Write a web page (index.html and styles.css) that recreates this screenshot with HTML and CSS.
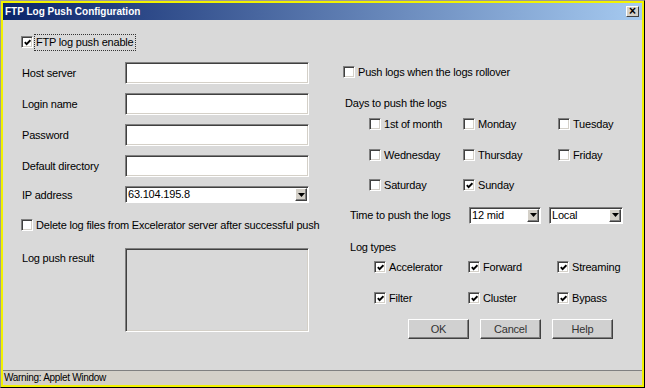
FILE: index.html
```html
<!DOCTYPE html>
<html lang="en">
<head>
  <meta charset="UTF-8" />
  <title>FTP Log Push Configuration</title>
  <link rel="stylesheet" href="styles.css">
</head>
<body>
  <div class="window">
    <div class="frame">
      <div class="titlebar">
        <span class="title">FTP Log Push Configuration</span>
        <span class="close">&#215;</span>
      </div>

      <div class="content">
        <div class="top-row">
          <label class="check">
            <span class="cb"><svg viewBox="0 0 7 7"><polyline points="0.8,3.2 2.6,5.2 6.4,1.2"/></svg></span>
            <span class="focus">FTP log push enable</span>
          </label>
        </div>

        <div class="main">
          <div class="left">
            <div class="form-grid">
              <span class="lbl">Host server</span>
              <div class="field"></div>
              <span class="lbl">Login name</span>
              <div class="field"></div>
              <span class="lbl">Password</span>
              <div class="field"></div>
              <span class="lbl">Default directory</span>
              <div class="field"></div>
              <span class="lbl">IP address</span>
              <div class="select">
                <span class="sel-text">63.104.195.8</span>
                <span class="arrow"><svg viewBox="0 0 7 4"><polygon points="0,0 7,0 3.5,4"/></svg></span>
              </div>
            </div>

            <label class="check delete-row">
              <span class="cb"></span>
              <span class="text">Delete log files from Excelerator server after successful push</span>
            </label>

            <div class="result-row">
              <span class="lbl result-lbl">Log push result</span>
              <div class="result-box"></div>
            </div>
          </div>

          <div class="right">
            <label class="check row rollover">
              <span class="cb"></span>
              <span class="text">Push logs when the logs rollover</span>
            </label>

            <div class="row caption days-caption">Days to push the logs</div>

            <div class="days-grid">
              <label class="check"><span class="cb"></span><span class="text">1st of month</span></label>
              <label class="check"><span class="cb"></span><span class="text">Monday</span></label>
              <label class="check"><span class="cb"></span><span class="text">Tuesday</span></label>
              <label class="check"><span class="cb"></span><span class="text">Wednesday</span></label>
              <label class="check"><span class="cb"></span><span class="text">Thursday</span></label>
              <label class="check"><span class="cb"></span><span class="text">Friday</span></label>
              <label class="check"><span class="cb"></span><span class="text">Saturday</span></label>
              <label class="check"><span class="cb"><svg viewBox="0 0 7 7"><polyline points="0.8,3.2 2.6,5.2 6.4,1.2"/></svg></span><span class="text">Sunday</span></label>
            </div>

            <div class="row time-row">
              <span class="time-lbl">Time to push the logs</span>
              <div class="select hour">
                <span class="sel-text">12 mid</span>
                <span class="arrow"><svg viewBox="0 0 7 4"><polygon points="0,0 7,0 3.5,4"/></svg></span>
              </div>
              <div class="select zone">
                <span class="sel-text">Local</span>
                <span class="arrow"><svg viewBox="0 0 7 4"><polygon points="0,0 7,0 3.5,4"/></svg></span>
              </div>
            </div>

            <div class="row caption types-caption">Log types</div>

            <div class="types-grid">
              <label class="check"><span class="cb"><svg viewBox="0 0 7 7"><polyline points="0.8,3.2 2.6,5.2 6.4,1.2"/></svg></span><span class="text">Accelerator</span></label>
              <label class="check"><span class="cb"><svg viewBox="0 0 7 7"><polyline points="0.8,3.2 2.6,5.2 6.4,1.2"/></svg></span><span class="text">Forward</span></label>
              <label class="check"><span class="cb"><svg viewBox="0 0 7 7"><polyline points="0.8,3.2 2.6,5.2 6.4,1.2"/></svg></span><span class="text">Streaming</span></label>
              <label class="check"><span class="cb"><svg viewBox="0 0 7 7"><polyline points="0.8,3.2 2.6,5.2 6.4,1.2"/></svg></span><span class="text">Filter</span></label>
              <label class="check"><span class="cb"><svg viewBox="0 0 7 7"><polyline points="0.8,3.2 2.6,5.2 6.4,1.2"/></svg></span><span class="text">Cluster</span></label>
              <label class="check"><span class="cb"><svg viewBox="0 0 7 7"><polyline points="0.8,3.2 2.6,5.2 6.4,1.2"/></svg></span><span class="text">Bypass</span></label>
            </div>

            <div class="buttons">
              <button class="btn">OK</button>
              <button class="btn">Cancel</button>
              <button class="btn">Help</button>
            </div>
          </div>
        </div>
      </div>

      <div class="statusbar">Warning: Applet Window</div>
    </div>
  </div>
</body>
</html>
```

FILE: styles.css
```css
body {
  margin: 0;
  font-family: "Liberation Sans", Arial, sans-serif;
  font-size: 11px;
  letter-spacing: -0.2px;
  color: #000;
  background: #d9d9d9;
}

.window {
  width: 645px;
  height: 388px;
  box-sizing: border-box;
  border: 1px solid;
  border-color: #9a9a9a #000 #000 #9a9a9a;
}

.frame {
  height: 100%;
  box-sizing: border-box;
  border: 2px solid #f2f200;
  display: flex;
  flex-direction: column;
  background: #d9d9d9;
}

/* title bar */
.titlebar {
  height: 17px;
  flex: none;
  display: flex;
  align-items: center;
  justify-content: space-between;
  padding: 0 2px 0 2px;
  background: linear-gradient(to right, #0a246a, #a6caf0);
}

.title {
  color: #fff;
  font-weight: bold;
  font-size: 10px;
  letter-spacing: 0;
}

.close {
  width: 13px;
  height: 11px;
  box-sizing: border-box;
  background: #d4d0c8;
  border: 1px solid;
  border-color: #fff #404040 #404040 #fff;
  font-size: 12px;
  font-weight: bold;
  line-height: 8px;
  text-align: center;
  margin-right: 1px;
}

/* content */
.content {
  flex: 1;
}

.top-row {
  padding: 13px 0 0 18px;
  height: 18px;
  display: flex;
}

.check {
  display: flex;
  align-items: center;
  white-space: nowrap;
}

.cb {
  width: 12px;
  height: 12px;
  flex: none;
  box-sizing: border-box;
  background: #fff;
  border: 1px solid;
  border-color: #808080 #fff #fff #808080;
  box-shadow: inset 1px 1px #404040, inset -1px -1px #d4d0c8;
  display: flex;
  align-items: center;
  justify-content: center;
}

.cb svg {
  width: 7px;
  height: 7px;
}

.cb polyline {
  fill: none;
  stroke: #000;
  stroke-width: 1.8;
}

.check .text {
  margin-left: 3px;
}

.focus {
  margin-left: 1px;
  height: 17px;
  box-sizing: border-box;
  border: 1px dotted #333;
  padding: 0 1px;
  line-height: 15px;
}

.main {
  display: flex;
  margin-top: 11px;
  padding-left: 18px;
}

/* left column */
.left {
  width: 288px;
}

.form-grid {
  display: grid;
  grid-template-columns: 104px 184px;
  grid-template-rows: 22px 22px 22px 22px 17px;
  row-gap: 9px;
  align-items: center;
}

.lbl {
  padding-left: 1px;
}

.field {
  height: 22px;
  box-sizing: border-box;
  background: #fff;
  border: 1px solid;
  border-color: #808080 #fff #fff #808080;
  box-shadow: inset 1px 1px #404040, inset -1px -1px #d4d0c8;
}

.select {
  height: 17px;
  box-sizing: border-box;
  background: #fff;
  border: 1px solid;
  border-color: #808080 #fff #fff #808080;
  box-shadow: inset 1px 1px #404040;
  display: flex;
  align-items: center;
  padding: 1px;
}

.sel-text {
  flex: 1;
  line-height: 13px;
  padding-left: 1px;
}

.arrow {
  width: 12px;
  height: 13px;
  box-sizing: border-box;
  background: #d4d0c8;
  border: 1px solid;
  border-color: #fff #404040 #404040 #fff;
  box-shadow: inset -1px -1px #808080;
  display: flex;
  align-items: center;
  justify-content: center;
}

.arrow svg {
  width: 7px;
  height: 4px;
}

.delete-row {
  margin-top: 15px;
  height: 14px;
}

.result-row {
  display: grid;
  grid-template-columns: 104px 184px;
  margin-top: 16px;
}

.result-lbl {
  padding-top: 3px;
  line-height: 14px;
}

.result-box {
  height: 84px;
  box-sizing: border-box;
  border: 1px solid;
  border-color: #808080 #fff #fff #808080;
  box-shadow: inset 1px 1px #404040, inset -1px -1px #d4d0c8;
}

/* right column */
.right {
  margin-left: 34px;
  flex: 1;
}

.row {
  height: 20px;
  display: flex;
  align-items: center;
}

.days-caption {
  margin-top: 11px;
  padding-left: 2px;
}

.days-grid {
  display: grid;
  grid-template-columns: 94px 95px auto;
  grid-auto-rows: 20px;
  row-gap: 10.5px;
  margin-top: 1px;
  padding-left: 26px;
}

.time-row {
  margin-top: 10px;
  padding-left: 7px;
}

.time-lbl {
  width: 119px;
}

.hour {
  width: 72px;
}

.zone {
  width: 74px;
  margin-left: 8px;
}

.types-caption {
  margin-top: 12px;
  padding-left: 7px;
}

.types-grid {
  display: grid;
  grid-template-columns: 94px 89px auto;
  grid-auto-rows: 20px;
  row-gap: 11px;
  padding-left: 31px;
}

.buttons {
  display: flex;
  gap: 11px;
  margin-top: 11px;
  padding-left: 65px;
}

.btn {
  width: 61px;
  height: 20px;
  box-sizing: border-box;
  font-family: "Liberation Sans", Arial, sans-serif;
  font-size: 11px;
  letter-spacing: -0.2px;
  color: #333;
  background: #d0d0d0;
  border: 1px solid;
  border-color: #fff #404040 #404040 #fff;
  box-shadow: inset -1px -1px #808080;
  padding: 0;
}

/* status bar */
.statusbar {
  height: 15px;
  flex: none;
  box-sizing: border-box;
  border-top: 1px solid #808080;
  background: #d4d0c8;
  font-size: 10px;
  letter-spacing: -0.3px;
  line-height: 14px;
  padding-left: 1px;
}
```
